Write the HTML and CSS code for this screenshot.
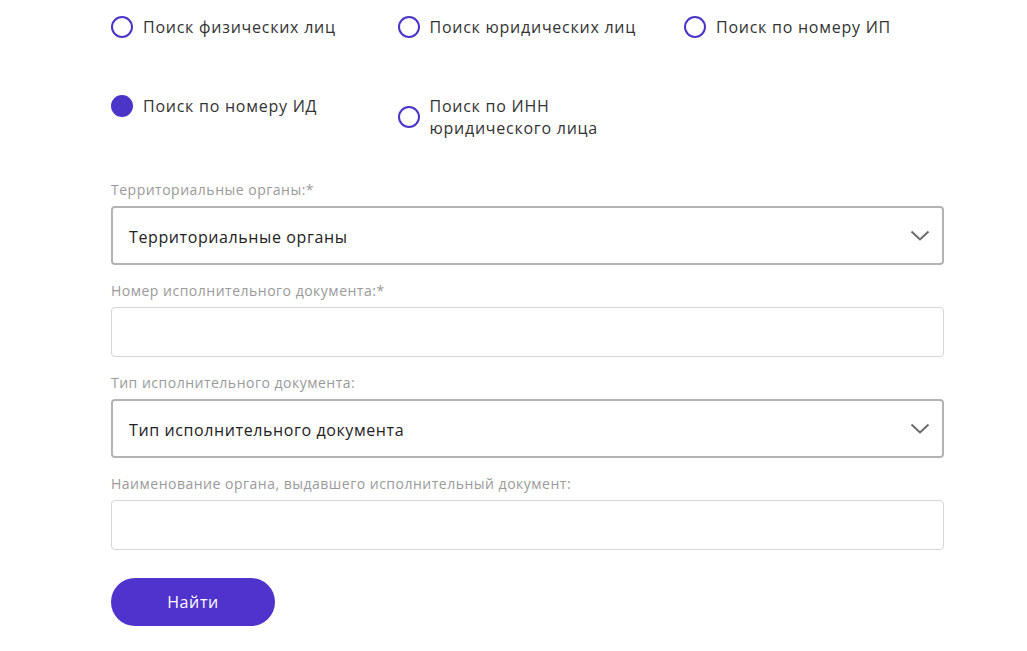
FILE: index.html
```html
<!DOCTYPE html>
<html lang="ru">
<head>
<meta charset="utf-8">
<title>Поиск</title>
<link rel="stylesheet" href="styles.css">
</head>
<body>
<form class="form">
  <div class="radios">
    <label class="radio"><span class="dot"></span><span class="rtext">Поиск физических лиц</span></label>
    <label class="radio"><span class="dot"></span><span class="rtext">Поиск юридических лиц</span></label>
    <label class="radio"><span class="dot"></span><span class="rtext">Поиск по номеру ИП</span></label>
    <label class="radio"><span class="dot checked"></span><span class="rtext">Поиск по номеру ИД</span></label>
    <label class="radio"><span class="dot"></span><span class="rtext">Поиск по ИНН<br>юридического лица</span></label>
  </div>

  <div class="field">
    <div class="flabel">Территориальные органы:*</div>
    <div class="select"><span>Территориальные органы</span>
      <svg class="chev" width="20" height="12" viewBox="0 0 20 12"><path d="M1.5 1.5 L10 9.5 L18.5 1.5" fill="none" stroke="#6b6b6b" stroke-width="2"/></svg>
    </div>
  </div>

  <div class="field">
    <div class="flabel">Номер исполнительного документа:*</div>
    <div class="input"></div>
  </div>

  <div class="field">
    <div class="flabel">Тип исполнительного документа:</div>
    <div class="select"><span>Тип исполнительного документа</span>
      <svg class="chev" width="20" height="12" viewBox="0 0 20 12"><path d="M1.5 1.5 L10 9.5 L18.5 1.5" fill="none" stroke="#6b6b6b" stroke-width="2"/></svg>
    </div>
  </div>

  <div class="field">
    <div class="flabel">Наименование органа, выдавшего исполнительный документ:</div>
    <div class="input"></div>
  </div>

  <button type="button" class="btn">Найти</button>
</form>
</body>
</html>
```

FILE: styles.css
```css
html, body {
  margin: 0;
  padding: 0;
  background: #fff;
}
body {
  font-family: "Open Sans", "Liberation Sans", sans-serif;
  color: #333;
}
.form {
  width: 833px;
  margin-left: 111px;
  padding-top: 16px;
}
.radios {
  display: grid;
  grid-template-columns: 286.5px 286.5px 260px;
  row-gap: 57px;
  align-items: start;
  margin-bottom: 41px;
}
.radio {
  display: flex;
  align-items: center;
  font-size: 16px;
  line-height: 22px;
  letter-spacing: 0.75px;
  color: #333;
}
.dot {
  box-sizing: border-box;
  width: 22px;
  height: 22px;
  border: 2px solid #4b35c8;
  border-radius: 50%;
  flex: none;
  margin-right: 10px;
}
.dot.checked {
  background: #4b35c8;
}
.field {
  margin-bottom: 16px;
}
.flabel {
  font-size: 14px;
  line-height: 20px;
  color: #9a9a9a;
  letter-spacing: 0.5px;
  margin-bottom: 6px;
}
.select {
  box-sizing: border-box;
  height: 59px;
  border: 2px solid #b3b3b3;
  border-radius: 4px;
  display: flex;
  align-items: center;
  justify-content: space-between;
  padding: 2px 12px 0 16px;
  font-size: 16px;
  color: #222;
  letter-spacing: 0.6px;
}
.chev {
  display: block;
  margin-top: -2px;
}
.input {
  box-sizing: border-box;
  height: 50px;
  border: 1px solid #d6d6d6;
  border-radius: 4px;
}
.btn {
  display: block;
  margin-top: 28px;
  width: 164px;
  height: 48px;
  border: none;
  border-radius: 24px;
  background: #4f33cc;
  color: #fff;
  font-family: "Open Sans", "Liberation Sans", sans-serif;
  font-size: 16px;
  letter-spacing: 0.6px;
  cursor: pointer;
}
```
